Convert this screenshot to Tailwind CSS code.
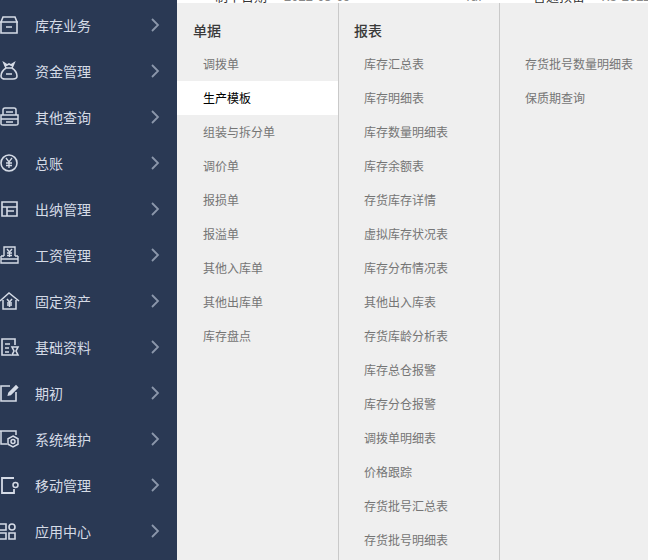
<!DOCTYPE html>
<html lang="zh">
<head>
<meta charset="UTF-8" />
<title>菜单</title>
<script src="https://cdn.jsdelivr.net/npm/@tailwindcss/browser@4"></script>
</head>
<body class="bg-white overflow-hidden font-['Noto_Sans_CJK_SC','Liberation_Sans',sans-serif]">
<div class="flex w-[648px] h-[560px] overflow-hidden">
  <!-- left nav -->
  <nav class="w-[177px] h-full shrink-0 bg-[#2a3954] text-[#d5dbe6] text-[14px] pt-[2px]">
    <a class="flex items-center h-[46px]">
      <svg class="w-[35px] h-[46px] shrink-0" viewBox="0 0 35 46" fill="none" stroke="currentColor" stroke-width="1.6"><path d="M0 20h18M1 20v11h16V20M1 20l2-5h12l2 5M6 25h6"/></svg>
      <span class="flex-1">库存业务</span>
      <svg class="w-[10px] h-[14px] mr-[17px]" viewBox="0 0 10 14" fill="none" stroke="#8b97ab" stroke-width="1.8"><path d="M2 1l6 6-6 6"/></svg>
    </a>
    <a class="flex items-center h-[46px]">
      <svg class="w-[35px] h-[46px] shrink-0" viewBox="0 0 35 46" fill="none" stroke="currentColor" stroke-width="1.6"><path d="M4 15l3 2 2-1 2 1 3-2-2 5c3 2 5 5 5 8 0 2-2 3-4 3H5c-2 0-4-1-4-3 0-3 2-6 5-8zM6 20h6M6 26h6"/></svg>
      <span class="flex-1">资金管理</span>
      <svg class="w-[10px] h-[14px] mr-[17px]" viewBox="0 0 10 14" fill="none" stroke="#8b97ab" stroke-width="1.8"><path d="M2 1l6 6-6 6"/></svg>
    </a>
    <a class="flex items-center h-[46px]">
      <svg class="w-[35px] h-[46px] shrink-0" viewBox="0 0 35 46" fill="none" stroke="currentColor" stroke-width="1.5"><path d="M3 21v-5c0-1 1-2 2-2h9c1 0 2 1 2 2v5M1 21h17v9c0 1-1 1-2 1H3c-1 0-2 0-2-1zM1 25h17M6 18h7M6 28h7"/></svg>
      <span class="flex-1">其他查询</span>
      <svg class="w-[10px] h-[14px] mr-[17px]" viewBox="0 0 10 14" fill="none" stroke="#8b97ab" stroke-width="1.8"><path d="M2 1l6 6-6 6"/></svg>
    </a>
    <a class="flex items-center h-[46px]">
      <svg class="w-[35px] h-[46px] shrink-0" viewBox="0 0 35 46" fill="none" stroke="currentColor" stroke-width="1.6"><circle cx="9" cy="23" r="8"/><path d="M6 18l3 4 3-4M9 22v6M6 23h6M6 25.500h6" stroke-width="1.300"/></svg>
      <span class="flex-1">总账</span>
      <svg class="w-[10px] h-[14px] mr-[17px]" viewBox="0 0 10 14" fill="none" stroke="#8b97ab" stroke-width="1.8"><path d="M2 1l6 6-6 6"/></svg>
    </a>
    <a class="flex items-center h-[46px]">
      <svg class="w-[35px] h-[46px] shrink-0" viewBox="0 0 35 46" fill="none" stroke="currentColor" stroke-width="1.6"><path d="M2 16h15v14H2zM2 21h15M7 21v9M7 25h7"/></svg>
      <span class="flex-1">出纳管理</span>
      <svg class="w-[10px] h-[14px] mr-[17px]" viewBox="0 0 10 14" fill="none" stroke="#8b97ab" stroke-width="1.8"><path d="M2 1l6 6-6 6"/></svg>
    </a>
    <a class="flex items-center h-[46px]">
      <svg class="w-[35px] h-[46px] shrink-0" viewBox="0 0 35 46" fill="none" stroke="currentColor" stroke-width="1.4"><path d="M4 24V15h11v9M1 24h3M15 24h3M1 24v7h17v-7M7 17l2.500 3 2.500-3M9.500 20v5M7 21h5M7 23.500h5M1 27h17"/></svg>
      <span class="flex-1">工资管理</span>
      <svg class="w-[10px] h-[14px] mr-[17px]" viewBox="0 0 10 14" fill="none" stroke="#8b97ab" stroke-width="1.8"><path d="M2 1l6 6-6 6"/></svg>
    </a>
    <a class="flex items-center h-[46px]">
      <svg class="w-[35px] h-[46px] shrink-0" viewBox="0 0 35 46" fill="none" stroke="currentColor" stroke-width="1.5"><path d="M0 23l9-8 10 8M3 22v9h13v-9M7 21l2.500 3 2.500-3M9.500 24v5M7 25h5M7 27h5"/></svg>
      <span class="flex-1">固定资产</span>
      <svg class="w-[10px] h-[14px] mr-[17px]" viewBox="0 0 10 14" fill="none" stroke="#8b97ab" stroke-width="1.8"><path d="M2 1l6 6-6 6"/></svg>
    </a>
    <a class="flex items-center h-[46px]">
      <svg class="w-[35px] h-[46px] shrink-0" viewBox="0 0 35 46" fill="none" stroke="currentColor" stroke-width="1.6"><path d="M11 31H2V15h13v6M5 20h5M5 24h4M5 28h4M12 23h6l-2 4 2 4h-6l2-4z"/></svg>
      <span class="flex-1">基础资料</span>
      <svg class="w-[10px] h-[14px] mr-[17px]" viewBox="0 0 10 14" fill="none" stroke="#8b97ab" stroke-width="1.8"><path d="M2 1l6 6-6 6"/></svg>
    </a>
    <a class="flex items-center h-[46px]">
      <svg class="w-[35px] h-[46px] shrink-0" viewBox="0 0 35 46" fill="none" stroke="currentColor" stroke-width="1.6"><path d="M10 16H1v15h15V22"/><path d="M9 23l7-7 1.500 1.500-7 7-2 .5z" fill="currentColor"/></svg>
      <span class="flex-1">期初</span>
      <svg class="w-[10px] h-[14px] mr-[17px]" viewBox="0 0 10 14" fill="none" stroke="#8b97ab" stroke-width="1.8"><path d="M2 1l6 6-6 6"/></svg>
    </a>
    <a class="flex items-center h-[46px]">
      <svg class="w-[35px] h-[46px] shrink-0" viewBox="0 0 35 46" fill="none" stroke="currentColor" stroke-width="1.5"><path d="M0 15h16v4M1 15v13h6M13 20l5 2.800v5.400L13 31l-5-2.800v-5.400z"/><circle cx="13" cy="25.500" r="2"/></svg>
      <span class="flex-1">系统维护</span>
      <svg class="w-[10px] h-[14px] mr-[17px]" viewBox="0 0 10 14" fill="none" stroke="#8b97ab" stroke-width="1.8"><path d="M2 1l6 6-6 6"/></svg>
    </a>
    <a class="flex items-center h-[46px]">
      <svg class="w-[35px] h-[46px] shrink-0" viewBox="0 0 35 46" fill="none" stroke="currentColor" stroke-width="1.8"><path d="M14 16H2v15h12v-4"/><circle cx="15.500" cy="23" r="2.500" stroke-width="1.500"/></svg>
      <span class="flex-1">移动管理</span>
      <svg class="w-[10px] h-[14px] mr-[17px]" viewBox="0 0 10 14" fill="none" stroke="#8b97ab" stroke-width="1.8"><path d="M2 1l6 6-6 6"/></svg>
    </a>
    <a class="flex items-center h-[46px]">
      <svg class="w-[35px] h-[46px] shrink-0" viewBox="0 0 35 46" fill="none" stroke="currentColor" stroke-width="1.6"><path d="M0 16h6v6H0M0 25h6v6H0M9 25h6v6H9z"/><rect x="9" y="16" width="6" height="6" rx="3"/></svg>
      <span class="flex-1">应用中心</span>
      <svg class="w-[10px] h-[14px] mr-[17px]" viewBox="0 0 10 14" fill="none" stroke="#8b97ab" stroke-width="1.8"><path d="M2 1l6 6-6 6"/></svg>
    </a>
  </nav>

  <div class="flex-1 min-w-0 flex flex-col">
    <!-- form row behind the menu, only its bottom edge shows -->
    <div class="h-[3px] overflow-hidden flex text-[13px] leading-[14px] shrink-0">
      <div class="flex -mt-[11px] whitespace-nowrap">
        <span class="w-[107px] pl-[38px] text-[#333]">制单日期</span>
        <span class="w-[182px] text-[#888]">2022-05-09</span>
        <span class="w-[67px] text-[#888]">fuf</span>
        <span class="w-[69px] text-[#333]">普通预留</span>
        <span class="text-[#888]">XS-2022</span>
      </div>
    </div>
    <!-- flyout -->
    <div class="flex flex-1 bg-[#efefef] text-[12px] text-[#757575]">
      <section class="w-[162px] shrink-0 border-r border-[#c9c9c9]">
        <h3 class="h-[44px] pl-[16px] pt-[16px] text-[14px] leading-[22px] font-medium text-[#3a3a3a]">单据</h3>
        <ul>
          <li class="h-[34px] pl-[26px] leading-[34px]">调拨单</li>
          <li class="h-[34px] pl-[26px] leading-[34px] bg-white text-black">生产模板</li>
          <li class="h-[34px] pl-[26px] leading-[34px]">组装与拆分单</li>
          <li class="h-[34px] pl-[26px] leading-[34px]">调价单</li>
          <li class="h-[34px] pl-[26px] leading-[34px]">报损单</li>
          <li class="h-[34px] pl-[26px] leading-[34px]">报溢单</li>
          <li class="h-[34px] pl-[26px] leading-[34px]">其他入库单</li>
          <li class="h-[34px] pl-[26px] leading-[34px]">其他出库单</li>
          <li class="h-[34px] pl-[26px] leading-[34px]">库存盘点</li>
        </ul>
      </section>
      <section class="w-[161px] shrink-0 border-r border-[#c9c9c9]">
        <h3 class="h-[44px] pl-[15px] pt-[16px] text-[14px] leading-[22px] font-medium text-[#3a3a3a]">报表</h3>
        <ul>
          <li class="h-[34px] pl-[25px] leading-[34px]">库存汇总表</li>
          <li class="h-[34px] pl-[25px] leading-[34px]">库存明细表</li>
          <li class="h-[34px] pl-[25px] leading-[34px]">库存数量明细表</li>
          <li class="h-[34px] pl-[25px] leading-[34px]">库存余额表</li>
          <li class="h-[34px] pl-[25px] leading-[34px]">存货库存详情</li>
          <li class="h-[34px] pl-[25px] leading-[34px]">虚拟库存状况表</li>
          <li class="h-[34px] pl-[25px] leading-[34px]">库存分布情况表</li>
          <li class="h-[34px] pl-[25px] leading-[34px]">其他出入库表</li>
          <li class="h-[34px] pl-[25px] leading-[34px]">存货库龄分析表</li>
          <li class="h-[34px] pl-[25px] leading-[34px]">库存总仓报警</li>
          <li class="h-[34px] pl-[25px] leading-[34px]">库存分仓报警</li>
          <li class="h-[34px] pl-[25px] leading-[34px]">调拨单明细表</li>
          <li class="h-[34px] pl-[25px] leading-[34px]">价格跟踪</li>
          <li class="h-[34px] pl-[25px] leading-[34px]">存货批号汇总表</li>
          <li class="h-[34px] pl-[25px] leading-[34px]">存货批号明细表</li>
        </ul>
      </section>
      <section class="flex-1 min-w-0">
        <ul class="pt-[44px]">
          <li class="h-[34px] pl-[25px] leading-[34px]">存货批号数量明细表</li>
          <li class="h-[34px] pl-[25px] leading-[34px]">保质期查询</li>
        </ul>
      </section>
    </div>
  </div>
</div>
</body>
</html>
